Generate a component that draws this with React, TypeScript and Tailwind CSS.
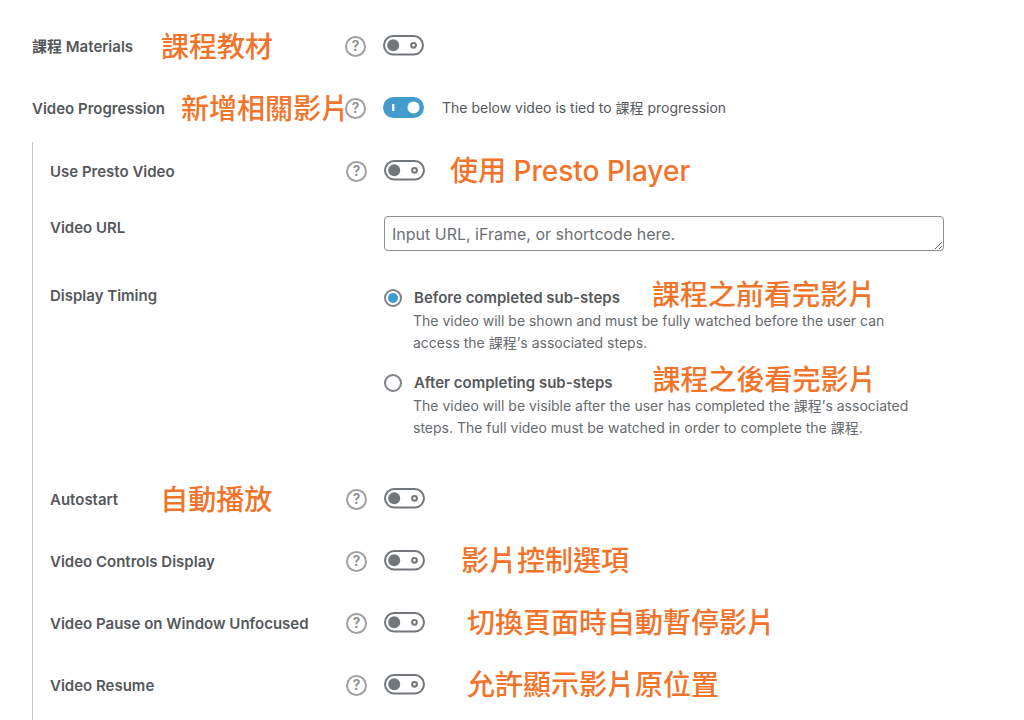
import { ReactNode, useState } from "react";

interface ToggleProps {
  id: string;
  defaultChecked?: boolean;
}

function Toggle({ id, defaultChecked = false }: ToggleProps) {
  const [on, setOn] = useState(defaultChecked);

  return (
    <span className="relative block h-[22px] w-[41px] shrink-0">
      <input
        id={id}
        type="checkbox"
        checked={on}
        onChange={(e) => setOn(e.target.checked)}
        className="absolute inset-0 h-full w-full cursor-pointer appearance-none rounded-full"
      />
      <svg
        viewBox="0 0 41 22"
        className="pointer-events-none relative block h-[22px] w-[41px]"
        aria-hidden="true"
      >
        {on ? (
          <>
            <rect x="0" y="0" width="41" height="21" rx="10.5" fill="#449ccd" />
            <rect x="9" y="7" width="2.4" height="7" fill="#fff" />
            <circle cx="30.5" cy="10.5" r="6" fill="#fff" />
          </>
        ) : (
          <>
            <rect x="1" y="1" width="39" height="18.6" rx="9.3" fill="#fff" stroke="#72777c" strokeWidth="2" />
            <circle cx="10.2" cy="10.3" r="6" fill="#72777c" />
            <circle cx="30.5" cy="10.3" r="2.4" fill="none" stroke="#72777c" strokeWidth="2" />
          </>
        )}
      </svg>
    </span>
  );
}

function Help({ topic }: { topic: string }) {
  return (
    <button
      type="button"
      aria-label={`Help: ${topic}`}
      className="flex h-[21px] w-[21px] shrink-0 cursor-pointer items-center justify-center rounded-full border-2 border-[#a0a0a0] text-sm leading-none font-semibold text-[#8c8c8c]"
    >
      ?
    </button>
  );
}

// Orange annotation next to a setting
function Note({ children, className = "" }: { children: ReactNode; className?: string }) {
  return (
    <span className={`text-[28px] leading-7 font-medium whitespace-nowrap text-[#f2742b] ${className}`}>
      {children}
    </span>
  );
}

interface SettingRowProps {
  id: string;
  label: string;
  labelWidth: string;
  height?: string;
  labelNote?: ReactNode;
  checked?: boolean;
  children?: ReactNode;
}

function SettingRow({ id, label, labelWidth, height = "h-[62px]", labelNote, checked, children }: SettingRowProps) {
  return (
    <div className={`flex items-center ${height}`}>
      <div className={`flex shrink-0 items-center pt-0.5 ${labelWidth}`}>
        <label htmlFor={id} className="font-semibold whitespace-nowrap">
          {label}
        </label>
        {labelNote}
      </div>
      <Help topic={label} />
      <div className="ml-[17px] flex items-center">
        <Toggle id={id} defaultChecked={checked} />
        {children}
      </div>
    </div>
  );
}

interface TimingOptionProps {
  id: string;
  title: string;
  note: string;
  noteGap: string;
  defaultChecked?: boolean;
  children: ReactNode;
}

function TimingOption({ id, title, note, noteGap, defaultChecked, children }: TimingOptionProps) {
  return (
    <div>
      <div className="flex items-end">
        <div className="flex items-center">
          <input
            id={id}
            type="radio"
            name="display-timing"
            defaultChecked={defaultChecked}
            className="grid h-[18px] w-[18px] shrink-0 appearance-none place-items-center rounded-full border-2 border-[#7e8287] bg-white before:h-2.5 before:w-2.5 before:rounded-full checked:before:bg-[#3e9bcd]"
          />
          <label htmlFor={id} className="pl-3 font-semibold whitespace-nowrap">
            {title}
          </label>
        </div>
        <Note className={noteGap}>{note}</Note>
      </div>
      <p className="mt-px max-w-[540px] pl-[29px] text-sm leading-[22px] text-[#666a6e]">{children}</p>
    </div>
  );
}

export default function App() {
  return (
    <main className="min-h-screen bg-white px-8 pt-[15px] font-['Inter','Noto_Sans_CJK_TC',sans-serif] text-[15px] leading-[22px] text-[#55585b]">
      <SettingRow
        id="materials"
        label="課程 Materials"
        labelWidth="w-[313px]"
        labelNote={<Note className="ml-7">課程教材</Note>}
      />
      <SettingRow
        id="progression"
        label="Video Progression"
        labelWidth="w-[313px]"
        labelNote={<Note className="ml-4">新增相關影片</Note>}
        checked
      >
        <span className="ml-[18px] text-sm">The below video is tied to 課程 progression</span>
      </SettingRow>

      <section className="mt-[3px] border-l border-[#c6c7c9] pb-1 pl-[17px]">
        <SettingRow id="presto" label="Use Presto Video" labelWidth="w-[296px]" height="h-[58px]">
          <Note className="ml-[25px]">使用 Presto Player</Note>
        </SettingRow>

        <div className="flex items-start pt-4">
          <label htmlFor="video-url" className="w-[334px] shrink-0 pt-px font-semibold">
            Video URL
          </label>
          <textarea
            id="video-url"
            rows={1}
            placeholder="Input URL, iFrame, or shortcode here."
            className="block h-[35px] max-w-[560px] min-w-0 flex-1 resize-y overflow-hidden rounded border border-[#8c8f94] bg-white px-[7px] py-[5px] text-base leading-6 placeholder:text-[#6c7074]"
          />
        </div>

        <fieldset className="mt-[30px] flex items-start" aria-labelledby="timing-label">
          <span id="timing-label" className="w-[334px] shrink-0 pt-1 font-semibold">
            Display Timing
          </span>
          <div className="flex max-w-[560px] min-w-0 flex-1 flex-col gap-3">
            <TimingOption
              id="timing-before"
              title="Before completed sub-steps"
              note="課程之前看完影片"
              noteGap="ml-8"
              defaultChecked
            >
              The video will be shown and must be fully watched before the user can access the 課程’s associated steps.
            </TimingOption>
            <TimingOption
              id="timing-after"
              title="After completing sub-steps"
              note="課程之後看完影片"
              noteGap="ml-10"
            >
              The video will be visible after the user has completed the 課程’s associated steps. The full video must be
              watched in order to complete the 課程.
            </TimingOption>
          </div>
        </fieldset>

        <div className="pt-[29px]">
          <SettingRow
            id="autostart"
            label="Autostart"
            labelWidth="w-[296px]"
            labelNote={<Note className="ml-[42px]">自動播放</Note>}
          />
          <SettingRow id="controls" label="Video Controls Display" labelWidth="w-[296px]">
            <Note className="ml-9">影片控制選項</Note>
          </SettingRow>
          <SettingRow id="pause" label="Video Pause on Window Unfocused" labelWidth="w-[296px]">
            <Note className="ml-[42px]">切換頁面時自動暫停影片</Note>
          </SettingRow>
          <SettingRow id="resume" label="Video Resume" labelWidth="w-[296px]">
            <Note className="ml-[42px]">允許顯示影片原位置</Note>
          </SettingRow>
        </div>
      </section>
    </main>
  );
}
